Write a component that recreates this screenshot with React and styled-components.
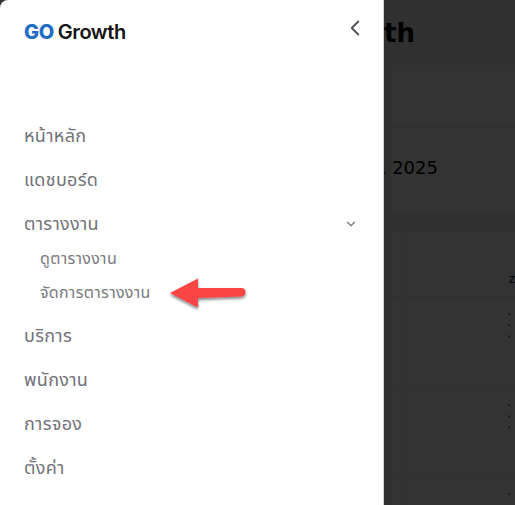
import React from 'react';
import styled, { createGlobalStyle } from 'styled-components';
import { ChevronLeft, ChevronDown } from 'lucide-react';

const GlobalStyle = createGlobalStyle`
  html, body {
    margin: 0;
    padding: 0;
    background: #333334;
    overflow: hidden;
  }
  body {
    font-family: "Noto Sans", "Noto Sans Thai", "Liberation Sans", sans-serif;
  }
`;

const Screen = styled.div`
  position: relative;
  width: 515px;
  height: 505px;
  overflow: hidden;
`;

const Main = styled.main`
  height: 100%;
  padding-left: 308px;
  box-sizing: border-box;
  background: #eeeff2;
  color: #000;
  font-family: "DejaVu Sans", sans-serif;
`;

const PageTitle = styled.h1`
  margin: 0;
  height: 65px;
  font-size: 26px;
  line-height: 66px;
  font-weight: 700;
`;

const SummaryCard = styled.div`
  height: 149px;
  margin-left: 82px;
  box-sizing: border-box;
  background: #fff;
  border-left: 1px solid #ececec;
  border-bottom: 1px solid #ececec;
  font-size: 18px;
  display: grid;
  grid-template-rows: 63px 1fr;
`;

const CardTop = styled.div`
  border-bottom: 1px solid #ececec;
`;

const DateText = styled.span`
  margin-left: -40px;
  padding-top: 25px;
  white-space: nowrap;
`;

const Table = styled.div`
  margin: 18px 0 0 82px;
  background: #fff;
  border-left: 1px solid #ececec;
`;

const TableRow = styled.div`
  height: ${({ $height }) => $height}px;
  box-sizing: border-box;
  border-bottom: 1px solid #ececec;
  display: grid;
  grid-template-columns: 11px 1fr;
`;

const RowCell = styled.div`
  border-left: ${({ $first }) => ($first ? 'none' : '1px solid #ececec')};
  text-align: right;
  color: #222;
  font-size: 12px;
  padding: ${({ $top }) => $top}px ${({ $right }) => $right || 0}px 0 0;
  line-height: 11px;
  white-space: pre-line;
`;

const Overlay = styled.div`
  position: absolute;
  inset: 0;
  background: rgba(0, 0, 0, 0.8);
`;

const Drawer = styled.aside`
  position: absolute;
  top: 0;
  left: 0;
  bottom: 0;
  width: 384px;
  background: #fff;
  border-top-left-radius: 8px;
  border-right: 1px solid #d4d4d4;
  box-sizing: border-box;
  display: flex;
  flex-direction: column;
  padding: 0 24px;
`;

const DrawerHead = styled.div`
  display: flex;
  align-items: center;
  justify-content: space-between;
  height: 64px;
  margin-bottom: 50px;
`;

const Logo = styled.div`
  display: flex;
  gap: 4px;
  font-family: Inter, "Liberation Sans", sans-serif;
  font-size: 20px;
  font-weight: 600;
  letter-spacing: -0.4px;
  color: #141414;
`;

const LogoMark = styled.span`
  color: #1f6ec4;
  font-weight: 800;
`;

const BackButton = styled.button`
  display: flex;
  border: none;
  background: none;
  padding: 0;
  margin: 0 -9px 8px 0;
  color: #55555c;
`;

const Nav = styled.nav`
  display: flex;
  flex-direction: column;
`;

const NavItem = styled.div`
  display: flex;
  align-items: center;
  justify-content: space-between;
  height: 44px;
  font-size: 18px;
  letter-spacing: 0.3px;
  color: #72727a;
`;

const SubList = styled.div`
  display: flex;
  flex-direction: column;
  padding-left: 16px;
  margin: -5px 0 5px;
`;

const SubItem = styled.div`
  height: 34px;
  line-height: 34px;
  font-size: 16px;
  letter-spacing: 0.3px;
  color: #7a7a82;
`;

const ExpandIcon = styled(ChevronDown)`
  margin-right: 1px;
  color: #74747c;
`;

const Pointer = styled.svg`
  position: absolute;
  left: 164px;
  top: 272px;
  overflow: visible;
`;

const items = ['หน้าหลัก', 'แดชบอร์ด'];
const rest = ['บริการ', 'พนักงาน', 'การจอง', 'ตั้งค่า'];

export default function App() {
  return (
    <Screen>
      <GlobalStyle />
      <Main>
        <PageTitle>Growth</PageTitle>
        <SummaryCard>
          <CardTop />
          <DateText>ม.ค. 2025</DateText>
        </SummaryCard>
        <Table>
          <TableRow $height={65}>
            <RowCell $first />
            <RowCell $top={42}>z</RowCell>
          </TableRow>
          <TableRow $height={91}>
            <RowCell $first />
            <RowCell $top={13} $right={4}>{'·\n·\n·'}</RowCell>
          </TableRow>
          <TableRow $height={89}>
            <RowCell $first />
            <RowCell $top={13} $right={4}>{'·\n·\n·'}</RowCell>
          </TableRow>
          <TableRow $height={40}>
            <RowCell $first />
            <RowCell $top={13} $right={4}>·</RowCell>
          </TableRow>
        </Table>
      </Main>
      <Overlay />
      <Drawer>
        <DrawerHead>
          <Logo>
            <LogoMark>GO</LogoMark>
            <span>Growth</span>
          </Logo>
          <BackButton aria-label="ย่อเมนู">
            <ChevronLeft size={26} strokeWidth={1.8} />
          </BackButton>
        </DrawerHead>
        <Nav>
          {items.map((item) => (
            <NavItem key={item}>{item}</NavItem>
          ))}
          <NavItem>
            ตารางงาน
            <ExpandIcon size={14} strokeWidth={2} />
          </NavItem>
          <SubList>
            <SubItem>ดูตารางงาน</SubItem>
            <SubItem>จัดการตารางงาน</SubItem>
          </SubList>
          {rest.map((item) => (
            <NavItem key={item}>{item}</NavItem>
          ))}
        </Nav>
      </Drawer>
      <Pointer width="90" height="40" viewBox="0 0 90 40">
        <defs>
          <filter id="arrowShadow" x="-20%" y="-30%" width="140%" height="170%">
            <feDropShadow dx="0" dy="2" stdDeviation="1.6" floodColor="#000" floodOpacity="0.5" />
          </filter>
        </defs>
        <path
          d="M6 21 L34 6.5 L34 16 L77 16 Q81.5 16 81.5 20 Q81.5 24 77 24.5 L34 26 L34 35.5 Z"
          fill="#fb4444"
          filter="url(#arrowShadow)"
        />
      </Pointer>
    </Screen>
  );
}
